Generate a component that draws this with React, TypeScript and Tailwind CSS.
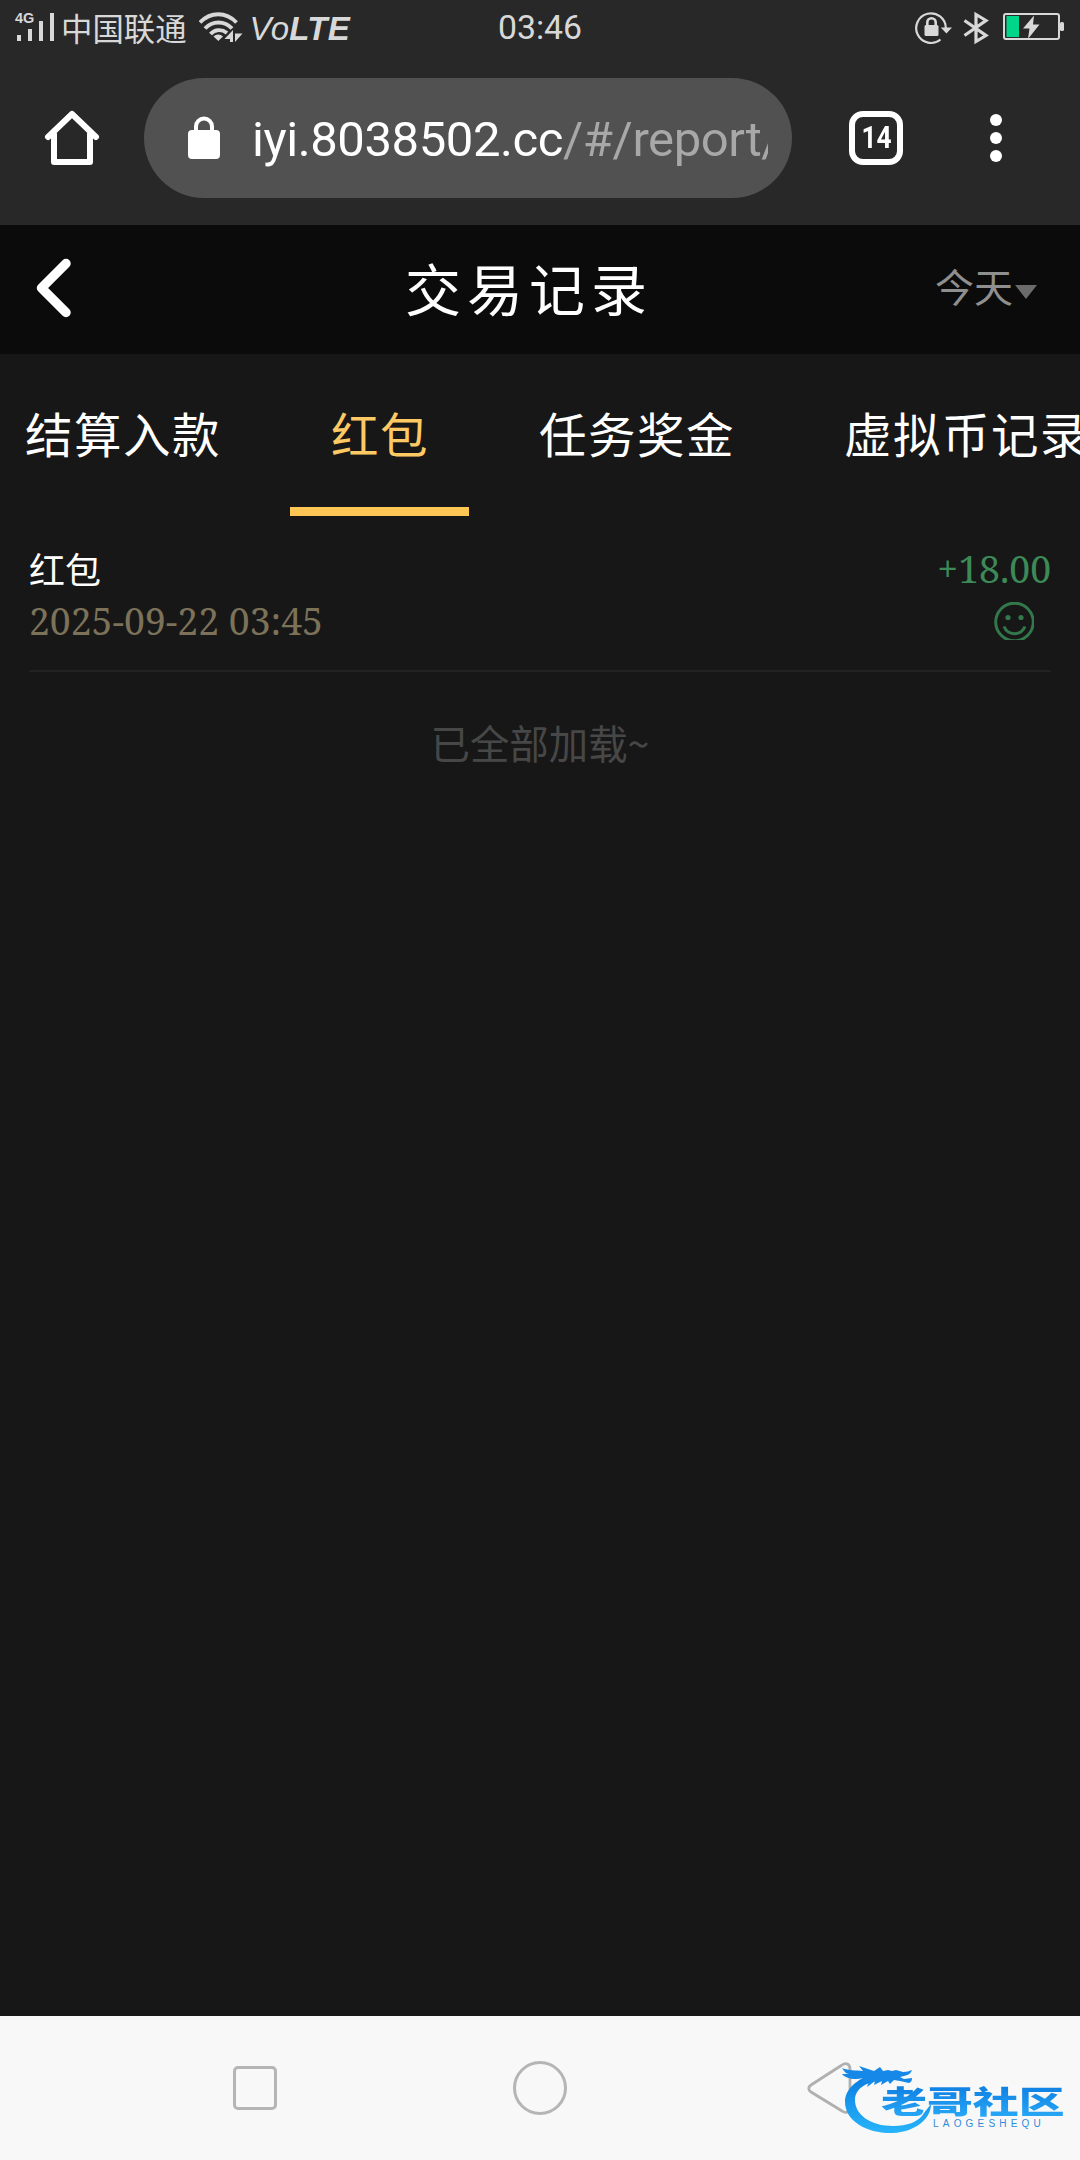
import React from "react";

const tabs = [
  { name: "结算入款", className: "w-[245px] pl-[25px]" },
  { name: "红包", className: "w-[270px] pl-[86px] text-[#fdc964]" },
  { name: "任务奖金", className: "w-[305px] pl-[24px]" },
  { name: "虚拟币记录", className: "w-[300px] pl-[24px]" },
];

const records = [
  { id: 1, title: "红包", time: "2025-09-22 03:45", amount: "+18.00" },
];

const StatusBar = () => (
  <div className="flex h-[56px] items-center justify-between pr-[15px] pl-[15px] text-[#d8d8d8]">
    <div className="flex w-[400px] items-center">
      <div className="relative -mt-[2px] h-[34px] w-[46px]">
        <span className="absolute top-[1px] left-0 font-['Liberation_Sans'] text-[14.500px] leading-[14px] font-bold">
          4G
        </span>
        <svg width="46" height="34" viewBox="0 0 46 34" fill="currentColor">
          <path d="M2 25h4v6H2zM13 19h4v12h-4zM24 11h4v20h-4zM35 3h4v28h-4z" />
        </svg>
      </div>
      <span className="-mt-px font-['Noto_Sans_CJK_SC',sans-serif] text-[31.400px] leading-[34px] whitespace-nowrap">
        中国联通
      </span>
      <svg className="-mt-[2px] ml-[12px]" width="46" height="34" viewBox="0 0 46 34" fill="none">
        <g stroke="currentColor" strokeWidth="3.900">
          <path d="M1 12.500C11.500 1.500 27 1.500 37.500 12.500" />
          <path d="M6 18.500C13.500 10.500 25.500 10.500 33 18.500" />
          <path d="M11.500 24C16 19 23 19 28 23" />
        </g>
        <path d="M14.500 26.500c2.500-2.800 7-2.800 9.500 0L19.300 31z" fill="currentColor" />
        <path d="M34 20v12h-3v-3h-5.500zM36 32V23.500h7.500z" fill="currentColor" />
      </svg>
      <span className="mt-[2px] ml-[5px] font-['Liberation_Sans'] text-[33px] leading-[34px] tracking-[0.300px] italic">
        Vo<b>LTE</b>
      </span>
    </div>
    <div className="font-[Roboto] text-[33.800px] leading-[34px]">03:46</div>
    <div className="flex w-[400px] items-center justify-end">
      <svg className="-mt-px" width="38" height="34" viewBox="0 0 38 34" fill="none">
        <path d="M25.500 28.500A14.800 14.800 0 1 1 30.800 17" stroke="currentColor" strokeWidth="2.200" />
        <path d="M25.800 16.500H37L31.400 22.500z" fill="currentColor" />
        <rect x="9.500" y="14" width="14" height="11" rx="1.500" fill="currentColor" />
        <path d="M12.300 16v-4.500a4.200 4.200 0 0 1 8.400 0V16" stroke="currentColor" strokeWidth="2.600" />
      </svg>
      <svg className="-mt-px ml-[10px]" width="26" height="34" viewBox="0 0 26 34" fill="none">
        <path
          d="M1.500 9.500 23 24.500 13 30.500V3.500L23 9.500 1.500 24.500"
          stroke="currentColor"
          strokeWidth="3.200"
        />
      </svg>
      <svg className="-mt-[2px] ml-[14px]" width="62" height="28" viewBox="0 0 62 28" fill="none">
        <rect x="1" y="1" width="55" height="25" rx="2" stroke="currentColor" strokeWidth="2" />
        <rect x="57" y="9" width="4" height="9" rx="1.500" fill="currentColor" />
        <rect x="3.500" y="3" width="12.500" height="21" fill="#00d68a" />
        <path d="M31 2.500 20 15.500h6.500L25 26 36.500 11.500h-6.500z" fill="currentColor" />
      </svg>
    </div>
  </div>
);

const BrowserBar = () => (
  <div className="flex h-[169px] items-start pt-[22px] text-white">
    <svg className="mt-[30px] ml-[42px]" width="60" height="60" viewBox="0 0 60 60" fill="none">
      <path
        d="M6 29 30 6 54 29M12 26V54H48V26"
        stroke="currentColor"
        strokeWidth="6"
        strokeLinejoin="round"
        strokeLinecap="round"
      />
    </svg>
    <div className="ml-[42px] flex h-[120px] w-[648px] items-center rounded-full bg-[#515151] pl-[44px]">
      <svg className="-mt-px" width="32" height="43" viewBox="0 0 32 43" fill="none">
        <rect y="14" width="32" height="29" rx="4" fill="currentColor" />
        <path d="M8 16v-5.500a8 8 0 0 1 16 0V16" stroke="currentColor" strokeWidth="4" />
      </svg>
      <div className="mt-[3px] ml-[32px] w-[516px] overflow-hidden font-[Roboto] text-[49px] leading-[64px] tracking-[-0.420px] whitespace-nowrap">
        iyi.8038502.cc<span className="text-[#a8a8a8]">/#/report/</span>
      </div>
    </div>
    <div className="mt-[33px] ml-[57px] flex h-[54px] w-[54px] items-center justify-center rounded-[14px] border-[6px] border-white font-[Roboto] text-[30.500px] leading-none font-bold">
      <span className="mt-px scale-x-[0.86]">14</span>
    </div>
    <div className="mt-[36px] ml-[87px] flex flex-col gap-[6px]">
      <i className="h-3 w-3 rounded-full bg-white" />
      <i className="h-3 w-3 rounded-full bg-white" />
      <i className="h-3 w-3 rounded-full bg-white" />
    </div>
  </div>
);

const PageHeader = () => (
  <header className="flex h-[129px] items-center bg-[#0b0b0b] pr-[43px] pl-[35px]">
    <svg className="-mt-[3px]" width="36" height="60" viewBox="0 0 36 60" fill="none">
      <path
        d="M31 5.500 6.500 30 31 54.500"
        stroke="#fff"
        strokeWidth="9.500"
        strokeLinecap="round"
        strokeLinejoin="round"
      />
    </svg>
    <h1 className="-mt-[5px] ml-[334px] text-[56px] leading-[72px] tracking-[6px] text-white">
      交易记录
    </h1>
    <div className="-mt-[10px] ml-auto flex items-center text-[39px] leading-[52px] text-[#8f8f8f]">
      今天
      <svg className="mt-[15px] ml-[2px]" width="22" height="14" viewBox="0 0 22 14">
        <path d="M0 0h22L11 14z" fill="#6b6b6b" />
      </svg>
    </div>
  </header>
);

const Watermark = () => (
  <div className="absolute top-[43px] left-[841px] h-[94px] w-[226px]">
    <svg width="226" height="94" viewBox="0 0 226 94" fill="none">
      <defs>
        <linearGradient id="ring" x1="0" y1="0" x2="0" y2="1">
          <stop offset="0" stopColor="#087be0" />
          <stop offset="1" stopColor="#28b4fa" />
        </linearGradient>
      </defs>
      <path
        d="M32 15C16 20 4 30 4 43c0 20 24 32 48 31 22-1 38-14 38-29l-7 9c-5 9-17 13-31 13-22 0-38-11-38-26 0-10 9-18 28-20z"
        fill="url(#ring)"
      />
      <path
        d="M1 9c7 3 14 2 21 3l-4-5 15 5 6-4 3 4 5-1 4 1 4-1 7 2c4 0 6-1 9-2-1 3-3 5-8 6l-4 1 4 2 8-1c0 3-1 4-3 5l-9-2-6-1-4 4-2-3-7 4 1-4-8 4 1-4-8 6 2-6-8 3 3-6c-9 2-18 1-22-4l7 0c-3 0-5-3-7-6z"
        fill="#1689e8"
      />
    </svg>
    <div className="absolute top-[22px] left-[40px] origin-left scale-x-[1.480] bg-gradient-to-b from-[#0b79df] to-[#2aaaf7] bg-clip-text font-['Noto_Sans_CJK_SC',sans-serif] text-[31px] leading-[38px] font-black whitespace-nowrap text-transparent">
      老哥社区
    </div>
    <div className="absolute top-[60px] left-[92px] font-['Liberation_Sans'] text-[10px] leading-[10px] tracking-[4.200px] text-[#2f8bdc]">
      LAOGESHEQU
    </div>
  </div>
);

const App = () => {
  return (
    <div className="flex h-[2160px] w-[1080px] flex-col overflow-hidden bg-[#282828] font-['Noto_Sans_CJK_SC',sans-serif]">
      <StatusBar />
      <BrowserBar />
      <PageHeader />

      <main className="flex-1 bg-[#171717]">
        <nav className="flex h-[162px] w-[1120px] text-[47.500px] leading-[70px] tracking-[1.500px] text-white">
          {tabs.map((tab, i) => (
            <div
              key={tab.name}
              className={`relative shrink-0 pt-[44px] whitespace-nowrap ${tab.className}`}
            >
              {tab.name}
              {i === 1 && (
                <div className="absolute bottom-0 left-[45px] h-[9px] w-[179px] bg-[#fec655]" />
              )}
            </div>
          ))}
        </nav>

        {records.map((record) => (
          <div
            key={record.id}
            className="mx-[29px] flex h-[156px] justify-between border-b-2 border-[#222] pt-[25px]"
          >
            <div>
              <div className="text-[36px] leading-[54px] text-white">{record.title}</div>
              <div className="mt-px font-['Noto_Serif','DejaVu_Serif_Condensed','Liberation_Serif',serif] text-[37.350px] leading-[50px] text-[#7c7259]">
                {record.time}
              </div>
            </div>
            <div className="flex flex-col items-end pt-px">
              <div className="font-['Noto_Serif','DejaVu_Serif_Condensed','Liberation_Serif',serif] text-[37.350px] leading-[54px] text-[#3c8a58]">
                {record.amount}
              </div>
              <svg className="mt-[6px] mr-[17px]" width="40" height="38" viewBox="0 0 40 38" fill="none">
                <circle cx="20.500" cy="20" r="18.800" stroke="#32784b" strokeWidth="3" />
                <circle cx="14" cy="15.500" r="2.600" fill="#32784b" />
                <circle cx="27" cy="15.500" r="2.600" fill="#32784b" />
                <path d="M10 24.500c4 9.500 17 9.500 21 0" stroke="#32784b" strokeWidth="3" />
              </svg>
            </div>
          </div>
        ))}

        <p className="mt-[43px] text-center text-[39.400px] leading-[54px] text-[#474747]">
          已全部加载~
        </p>
      </main>

      <footer className="relative flex h-[144px] items-center bg-[#f8f8f8]">
        <div className="ml-[233px] h-[44px] w-[44px] rounded-[5px] border-[3px] border-[#b5b5b5]" />
        <div className="ml-[236px] h-[54px] w-[54px] rounded-full border-[3px] border-[#b5b5b5]" />
        <svg className="ml-[240px]" width="46" height="54" viewBox="0 0 46 54" fill="none">
          <path
            d="M4 24 35 4c4-3 8-1 8 4v38c0 5-4 7-8 4L4 31c-3-2-3-5 0-7z"
            stroke="#b0b0b0"
            strokeWidth="2.800"
          />
        </svg>
        <Watermark />
      </footer>
    </div>
  );
};

export default App;
